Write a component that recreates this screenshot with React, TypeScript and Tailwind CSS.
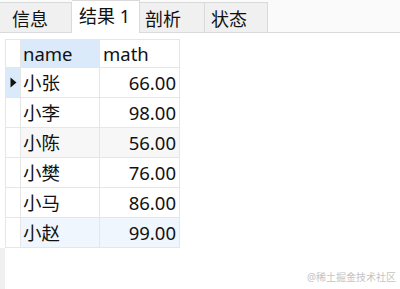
import React from "react";

const rows: { name: string; math: string; bg: string }[] = [
  { name: "小张", math: "66.00", bg: "bg-white" },
  { name: "小李", math: "98.00", bg: "bg-white" },
  { name: "小陈", math: "56.00", bg: "bg-[#f7f7f7]" },
  { name: "小樊", math: "76.00", bg: "bg-white" },
  { name: "小马", math: "86.00", bg: "bg-white" },
  { name: "小赵", math: "99.00", bg: "bg-[#f0f6fd]" },
];

export default function App() {
  const font = {
    fontFamily: '"Noto Sans", "Noto Sans CJK SC", sans-serif',
  };
  return (
    <div
      className="relative w-[400px] h-[289px] overflow-hidden bg-white flex flex-col text-[#111]"
      style={font}
    >
      {/* Tab bar */}
      <div className="flex items-end h-[33px] border-b border-[#dadada] bg-[#fafafa] shrink-0">
        <div className="w-[72px] h-[30px] bg-[#f0f0f0] border-t border-r border-[#dadada] pl-[12px] pt-[2px] text-[18px] leading-[28px]">
          信息
        </div>
        <div className="w-[68px] h-[33px] -mb-px bg-white border-t border-r border-[#dadada] pl-[7px] pt-[1px] text-[18px] leading-[28px]">
          结果 1
        </div>
        <div className="w-[65px] h-[30px] bg-[#f0f0f0] border-t border-r border-[#dadada] pl-[5px] pt-[2px] text-[18px] leading-[28px]">
          剖析
        </div>
        <div className="w-[63px] h-[30px] bg-[#f0f0f0] border-t border-r border-[#dadada] pl-[6px] pt-[2px] text-[18px] leading-[28px]">
          状态
        </div>
      </div>

      {/* Body */}
      <div className="flex-1 flex flex-col pt-[6px]">
        <div className="pl-[5px]">
          <div className="grid grid-cols-[16px_79px_80px] text-[18.5px]">
            {/* header */}
            <div className="h-[29px] bg-white border-t border-l border-r border-b border-[#e6e6e6]" />
            <div className="h-[29px] bg-[#dbeafa] border-t border-r border-b border-[#e6e6e6] pl-[2px] leading-[28px]">
              name
            </div>
            <div className="h-[29px] bg-white border-t border-r border-b border-[#e6e6e6] pl-[3px] leading-[28px]">
              math
            </div>
            {rows.map((r, i) => (
              <React.Fragment key={r.name}>
                <div
                  className={`h-[30px] border-l border-r border-b border-[#e6e6e6] flex items-center justify-center ${
                    i === 0 ? "bg-[#dbeafa]" : "bg-white"
                  }`}
                >
                  {i === 0 && (
                    <svg width="7" height="11" viewBox="0 0 7 11">
                      <path d="M0.5 0.5 L6.5 5.5 L0.5 10.5 Z" fill="#111" />
                    </svg>
                  )}
                </div>
                <div
                  className={`h-[30px] border-r border-b border-[#e6e6e6] pl-[2px] leading-[29px] ${r.bg}`}
                >
                  {r.name}
                </div>
                <div
                  className={`h-[30px] border-r border-b border-[#e6e6e6] pr-[3px] text-right leading-[29px] ${r.bg}`}
                >
                  {r.math}
                </div>
              </React.Fragment>
            ))}
          </div>
        </div>
        <div className="flex-1 flex">
          <div className="w-[5px] bg-[#f0f0f0]" />
          <div className="flex-1 bg-white" />
        </div>
      </div>

      <div className="absolute right-[4px] bottom-[7px] text-[10px] text-[#c4c4c4] leading-none">
        @稀土掘金技术社区
      </div>
    </div>
  );
}
